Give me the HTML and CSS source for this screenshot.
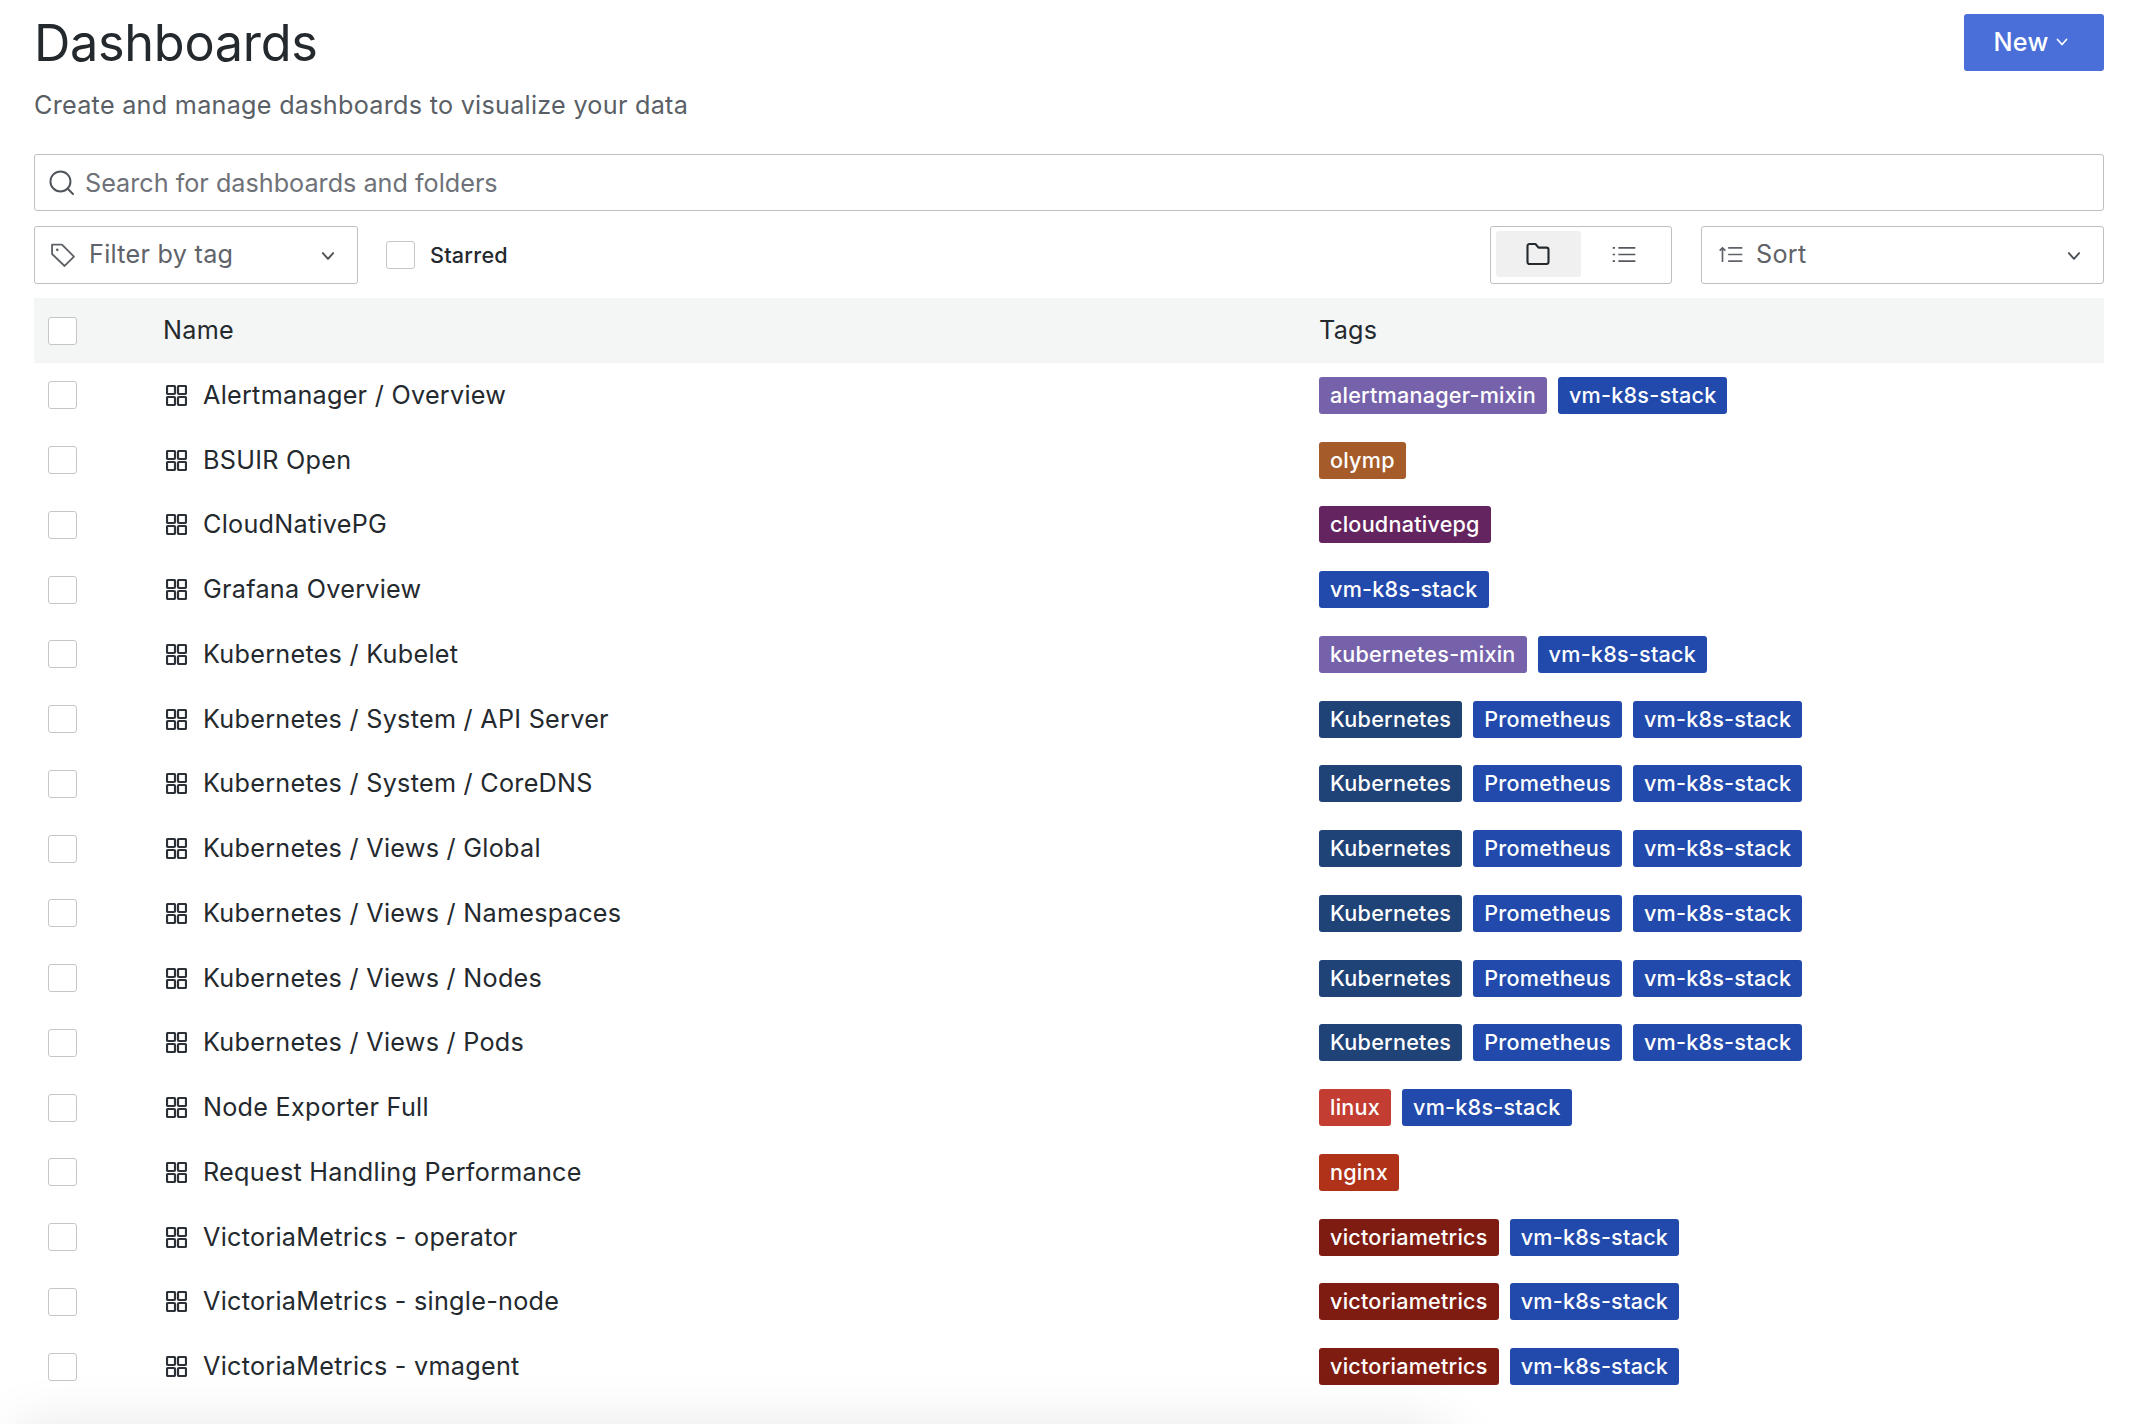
FILE: index.html
```html
<!DOCTYPE html>
<html lang="en">
<head>
  <meta charset="UTF-8" />
  <title>Dashboards</title>
  <link rel="stylesheet" href="styles.css">
</head>
<body>
  <svg class="defs" width="0" height="0">
    <symbol id="apps" viewBox="0 0 21 21">
      <path d="M2 1h6a1 1 0 0 1 1 1v6a1 1 0 0 1-1 1H2a1 1 0 0 1-1-1V2a1 1 0 0 1 1-1zM13 1h6a1 1 0 0 1 1 1v6a1 1 0 0 1-1 1h-6a1 1 0 0 1-1-1V2a1 1 0 0 1 1-1zM2 12h6a1 1 0 0 1 1 1v6a1 1 0 0 1-1 1H2a1 1 0 0 1-1-1v-6a1 1 0 0 1 1-1zM13 12h6a1 1 0 0 1 1 1v6a1 1 0 0 1-1 1h-6a1 1 0 0 1-1-1v-6a1 1 0 0 1 1-1z" fill="none" stroke="currentColor" stroke-width="2.2"/>
    </symbol>
    <symbol id="chevron" viewBox="0 0 14 14">
      <path d="M2.5 4.5 7 9.5l4.5-5" fill="none" stroke="currentColor" stroke-width="1.7" stroke-linecap="round" stroke-linejoin="round"/>
    </symbol>
  </svg>

  <div class="page-head">
    <div>
      <h1>Dashboards</h1>
      <p class="sub">Create and manage dashboards to visualize your data</p>
    </div>
    <button class="new-btn">New <svg class="new-chevron"><use href="#chevron"/></svg></button>
  </div>

  <div class="search">
    <svg class="search-icon" viewBox="0 0 24 24"><circle cx="11" cy="11" r="9.6" fill="none" stroke="currentColor" stroke-width="1.9"/><path d="M18 18l5 5" stroke="currentColor" stroke-width="1.9" stroke-linecap="round"/></svg>
    <span>Search for dashboards and folders</span>
  </div>

  <div class="toolbar">
    <div class="select filter">
      <svg class="tag-icon" viewBox="0 0 24 24"><path d="M2 2.5h9.5L23 14 14 23 2 11.5z" fill="none" stroke="currentColor" stroke-width="1.8" stroke-linejoin="round"/><circle cx="7" cy="7.5" r="1.3" fill="currentColor"/></svg>
      <span>Filter by tag</span>
      <svg class="chevron"><use href="#chevron"/></svg>
    </div>
    <label class="starred"><span class="check"></span>Starred</label>
    <div class="toggle">
      <span class="toggle-item active">
        <svg class="folder-icon" viewBox="0 0 24 24"><path d="M1.5 4a2 2 0 0 1 2-2h6l3 3.6h8a2 2 0 0 1 2 2V20a2 2 0 0 1-2 2h-17a2 2 0 0 1-2-2z" fill="none" stroke="currentColor" stroke-width="2.1" stroke-linejoin="round"/></svg>
      </span>
      <span class="toggle-item">
        <svg class="list-icon" viewBox="0 0 24 18"><path d="M6 2h18M6 9h18M6 16h18" stroke="currentColor" stroke-width="1.8"/><path d="M0 2h2.5M0 9h2.5M0 16h2.5" stroke="currentColor" stroke-width="1.8"/></svg>
      </span>
    </div>
    <div class="select sort">
      <svg class="sort-icon" viewBox="0 0 24 18"><path d="M3 17V2M0 5l3-3 3 3" fill="none" stroke="currentColor" stroke-width="1.8"/><path d="M9 2h15M9 9h15M9 16h15" stroke="currentColor" stroke-width="1.8"/></svg>
      <span>Sort</span>
      <svg class="chevron"><use href="#chevron"/></svg>
    </div>
  </div>

  <div class="table">
    <div class="row head">
      <span class="check"></span>
      <div class="name">Name</div>
      <div class="tags-title">Tags</div>
    </div>
    <div class="row">
      <span class="check"></span>
      <div class="name"><svg class="apps"><use href="#apps"/></svg>Alertmanager / Overview</div>
      <div class="tags"><span class="tag purple">alertmanager-mixin</span><span class="tag blue">vm-k8s-stack</span></div>
    </div>
    <div class="row">
      <span class="check"></span>
      <div class="name"><svg class="apps"><use href="#apps"/></svg>BSUIR Open</div>
      <div class="tags"><span class="tag orange">olymp</span></div>
    </div>
    <div class="row">
      <span class="check"></span>
      <div class="name"><svg class="apps"><use href="#apps"/></svg>CloudNativePG</div>
      <div class="tags"><span class="tag plum">cloudnativepg</span></div>
    </div>
    <div class="row">
      <span class="check"></span>
      <div class="name"><svg class="apps"><use href="#apps"/></svg>Grafana Overview</div>
      <div class="tags"><span class="tag blue">vm-k8s-stack</span></div>
    </div>
    <div class="row">
      <span class="check"></span>
      <div class="name"><svg class="apps"><use href="#apps"/></svg>Kubernetes / Kubelet</div>
      <div class="tags"><span class="tag purple">kubernetes-mixin</span><span class="tag blue">vm-k8s-stack</span></div>
    </div>
    <div class="row">
      <span class="check"></span>
      <div class="name"><svg class="apps"><use href="#apps"/></svg>Kubernetes / System / API Server</div>
      <div class="tags"><span class="tag navy">Kubernetes</span><span class="tag blue">Prometheus</span><span class="tag blue">vm-k8s-stack</span></div>
    </div>
    <div class="row">
      <span class="check"></span>
      <div class="name"><svg class="apps"><use href="#apps"/></svg>Kubernetes / System / CoreDNS</div>
      <div class="tags"><span class="tag navy">Kubernetes</span><span class="tag blue">Prometheus</span><span class="tag blue">vm-k8s-stack</span></div>
    </div>
    <div class="row">
      <span class="check"></span>
      <div class="name"><svg class="apps"><use href="#apps"/></svg>Kubernetes / Views / Global</div>
      <div class="tags"><span class="tag navy">Kubernetes</span><span class="tag blue">Prometheus</span><span class="tag blue">vm-k8s-stack</span></div>
    </div>
    <div class="row">
      <span class="check"></span>
      <div class="name"><svg class="apps"><use href="#apps"/></svg>Kubernetes / Views / Namespaces</div>
      <div class="tags"><span class="tag navy">Kubernetes</span><span class="tag blue">Prometheus</span><span class="tag blue">vm-k8s-stack</span></div>
    </div>
    <div class="row">
      <span class="check"></span>
      <div class="name"><svg class="apps"><use href="#apps"/></svg>Kubernetes / Views / Nodes</div>
      <div class="tags"><span class="tag navy">Kubernetes</span><span class="tag blue">Prometheus</span><span class="tag blue">vm-k8s-stack</span></div>
    </div>
    <div class="row">
      <span class="check"></span>
      <div class="name"><svg class="apps"><use href="#apps"/></svg>Kubernetes / Views / Pods</div>
      <div class="tags"><span class="tag navy">Kubernetes</span><span class="tag blue">Prometheus</span><span class="tag blue">vm-k8s-stack</span></div>
    </div>
    <div class="row">
      <span class="check"></span>
      <div class="name"><svg class="apps"><use href="#apps"/></svg>Node Exporter Full</div>
      <div class="tags"><span class="tag red">linux</span><span class="tag blue">vm-k8s-stack</span></div>
    </div>
    <div class="row">
      <span class="check"></span>
      <div class="name"><svg class="apps"><use href="#apps"/></svg>Request Handling Performance</div>
      <div class="tags"><span class="tag rust">nginx</span></div>
    </div>
    <div class="row">
      <span class="check"></span>
      <div class="name"><svg class="apps"><use href="#apps"/></svg>VictoriaMetrics - operator</div>
      <div class="tags"><span class="tag maroon">victoriametrics</span><span class="tag blue">vm-k8s-stack</span></div>
    </div>
    <div class="row">
      <span class="check"></span>
      <div class="name"><svg class="apps"><use href="#apps"/></svg>VictoriaMetrics - single-node</div>
      <div class="tags"><span class="tag maroon">victoriametrics</span><span class="tag blue">vm-k8s-stack</span></div>
    </div>
    <div class="row">
      <span class="check"></span>
      <div class="name"><svg class="apps"><use href="#apps"/></svg>VictoriaMetrics - vmagent</div>
      <div class="tags"><span class="tag maroon">victoriametrics</span><span class="tag blue">vm-k8s-stack</span></div>
    </div>
  </div>

  <div class="bottom-shade"></div>
</body>
</html>
```

FILE: styles.css
```css
body {
  margin: 0;
  padding: 0 28px 0 34px;
  height: 1424px;
  box-sizing: border-box;
  overflow: hidden;
  background: #fff;
  color: #24292e;
  font-family: Inter, "Liberation Sans", sans-serif;
  font-size: 25.2px;
  letter-spacing: 0.27px;
  position: relative;
}

.defs {
  position: absolute;
}

.page-head {
  display: flex;
  justify-content: space-between;
  align-items: flex-start;
  height: 154px;
}

h1 {
  margin: 13px 0 0;
  font-size: 50.4px;
  font-weight: 400;
  letter-spacing: -0.3px;
  line-height: 60px;
  color: #24292e;
}

.sub {
  margin: 16px 0 0;
  line-height: 32px;
  color: #5a5f66;
}

.new-btn {
  margin-top: 14px;
  width: 140px;
  height: 57px;
  border: 0;
  border-radius: 3px;
  background: #4a6fd9;
  color: #fff;
  font-family: inherit;
  font-size: 25.2px;
  letter-spacing: 0.27px;
  font-weight: 550;
  display: flex;
  align-items: center;
  justify-content: center;
  gap: 6px;
  padding: 0 6px 2px 0;
}

.new-chevron {
  width: 14px;
  height: 14px;
}

.search {
  height: 57px;
  box-sizing: border-box;
  border: 1px solid #bdbfc2;
  border-radius: 3px;
  display: flex;
  align-items: center;
  padding-left: 14px;
  color: #6e7278;
  letter-spacing: 0;
}

.search-icon {
  width: 25px;
  height: 25px;
  margin-right: 11px;
  color: #50555b;
}

.toolbar {
  display: flex;
  align-items: center;
  margin-top: 15px;
  height: 58px;
}

.select {
  height: 58px;
  box-sizing: border-box;
  border: 1px solid #bdbfc2;
  border-radius: 3px;
  display: flex;
  align-items: center;
  padding: 0 21px 2px 15px;
  color: #5f6369;
}

.filter {
  width: 324px;
}

.tag-icon {
  width: 25px;
  height: 25px;
  margin-right: 14px;
}

.chevron {
  width: 16px;
  height: 16px;
  margin-left: auto;
  margin-top: 4px;
  color: #4e5359;
}

.starred {
  display: flex;
  align-items: center;
  margin-left: 28px;
  font-size: 21.6px;
  letter-spacing: 0.23px;
  font-weight: 500;
  color: #24292e;
}

.starred .check {
  margin-right: 15px;
}

.check {
  display: block;
  width: 29px;
  height: 28px;
  box-sizing: border-box;
  border: 1px solid #c4c6c8;
  border-radius: 3px;
  background: #fff;
}

.toggle {
  margin-left: auto;
  width: 182px;
  height: 58px;
  box-sizing: border-box;
  border: 1px solid #bdbfc2;
  border-radius: 3px;
  display: flex;
  align-items: center;
  padding: 0 5px 2px;
}

.toggle-item {
  width: 85px;
  height: 46px;
  border-radius: 3px;
  display: flex;
  align-items: center;
  justify-content: center;
  color: #55595f;
}

.toggle-item.active {
  background: #f0f0f0;
  color: #24292e;
}

.folder-icon {
  width: 24px;
  height: 24px;
  margin-right: 2px;
}

.list-icon {
  width: 24px;
  height: 17px;
}

.sort {
  margin-left: 29px;
  width: 403px;
  padding-left: 17px;
}

.sort-icon {
  width: 24px;
  height: 17px;
  margin-right: 13px;
}

.table {
  margin-top: 14px;
}

.row {
  display: grid;
  grid-template-columns: 129px 1156px 1fr;
  align-items: center;
  height: 64.75px;
}

.row > .check {
  margin-left: 14px;
}

.row.head {
  height: 65px;
  background: #f4f5f5;
}

.name,
.tags-title {
  display: flex;
  align-items: center;
  padding-bottom: 1px;
}

.apps {
  width: 21px;
  height: 21px;
  margin: 1px 16px 0 3px;
  color: #2c3137;
}

.tags {
  display: flex;
  gap: 11px;
}

.tag {
  height: 37px;
  display: flex;
  align-items: center;
  padding: 0 11px 1px;
  box-sizing: border-box;
  border-radius: 3px;
  color: #fff;
  font-size: 21.6px;
  letter-spacing: 0.23px;
  font-weight: 550;
}

.purple { background: #7562aa; }
.blue { background: #224aad; }
.orange { background: #a55b2a; }
.plum { background: #64245f; }
.navy { background: #1f4277; }
.red { background: #c33d32; }
.rust { background: #af3219; }
.maroon { background: #7e1c12; }

.bottom-shade {
  position: absolute;
  left: 20px;
  top: 1436px;
  width: 1420px;
  height: 40px;
  box-shadow: 0 0 60px 4px rgba(0, 0, 0, 0.13);
  pointer-events: none;
}
```
